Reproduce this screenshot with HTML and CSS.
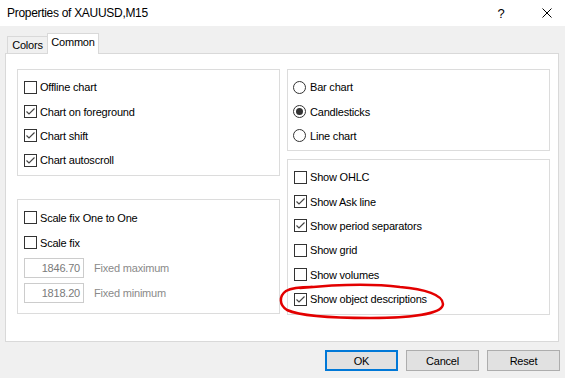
FILE: index.html
```html
<!DOCTYPE html>
<html lang="en">
<head>
  <meta charset="UTF-8">
  <meta name="viewport" content="width=device-width, initial-scale=1.0">
  <title>Properties of XAUUSD,M15</title>
  <link rel="stylesheet" href="styles.css">
</head>
<body>
  <div class="window">
    <!-- Barra del titolo -->
    <div class="titlebar">
      <span class="title">Properties of XAUUSD,M15</span>
      <span class="help">?</span>
      <span class="close">
        <svg width="10" height="10" viewBox="0 0 10 10"><path d="M0.5 0.5 L9.5 9.5 M9.5 0.5 L0.5 9.5" stroke="#000" stroke-width="1" fill="none"/></svg>
      </span>
    </div>

    <!-- Schede -->
    <div class="tabs">
      <div class="tab">Colors</div>
      <div class="tab active">Common</div>
    </div>

    <div class="page">
      <div class="col col-left">
        <div class="group group-chart">
          <div class="row"><span class="box"></span>Offline chart</div>
          <div class="row"><span class="box checked"><svg viewBox="0 0 11 11"><polyline points="1.5,5.5 4,8 9.5,2.5"/></svg></span>Chart on foreground</div>
          <div class="row"><span class="box checked"><svg viewBox="0 0 11 11"><polyline points="1.5,5.5 4,8 9.5,2.5"/></svg></span>Chart shift</div>
          <div class="row"><span class="box checked"><svg viewBox="0 0 11 11"><polyline points="1.5,5.5 4,8 9.5,2.5"/></svg></span>Chart autoscroll</div>
        </div>
        <div class="group group-scale">
          <div class="row"><span class="box"></span>Scale fix One to One</div>
          <div class="row"><span class="box"></span>Scale fix</div>
          <div class="row"><span class="field">1846.70</span><span class="muted">Fixed maximum</span></div>
          <div class="row"><span class="field">1818.20</span><span class="muted">Fixed minimum</span></div>
        </div>
      </div>

      <div class="col col-right">
        <div class="group group-type">
          <div class="row"><span class="radio"></span>Bar chart</div>
          <div class="row"><span class="radio selected"></span>Candlesticks</div>
          <div class="row"><span class="radio"></span>Line chart</div>
        </div>
        <div class="group group-show">
          <div class="row"><span class="box"></span>Show OHLC</div>
          <div class="row"><span class="box checked"><svg viewBox="0 0 11 11"><polyline points="1.5,5.5 4,8 9.5,2.5"/></svg></span>Show Ask line</div>
          <div class="row"><span class="box checked"><svg viewBox="0 0 11 11"><polyline points="1.5,5.5 4,8 9.5,2.5"/></svg></span>Show period separators</div>
          <div class="row"><span class="box"></span>Show grid</div>
          <div class="row"><span class="box"></span>Show volumes</div>
          <div class="row"><span class="box checked"><svg viewBox="0 0 11 11"><polyline points="1.5,5.5 4,8 9.5,2.5"/></svg></span>Show object descriptions</div>
        </div>
      </div>
    </div>

    <div class="buttons">
      <div class="btn default">OK</div>
      <div class="btn">Cancel</div>
      <div class="btn">Reset</div>
    </div>

    <!-- Cerchio rosso disegnato a mano -->
    <svg class="annotation" width="565" height="378" viewBox="0 0 565 378">
      <path d="M300 288 C330 285 370 283 400 287 C425 289 443 295 443 304 C443 314 410 318 370 318 C335 318 300 316 287 310 C279 305 279 296 286 291 C291 288 300 287 312 287" fill="none" stroke="#e30000" stroke-width="2.5" stroke-linecap="round"/>
    </svg>
  </div>
</body>
</html>
```

FILE: styles.css
```css
/* Generale */
body {
  margin: 0;
  padding: 0;
  background: #f0f0f0;
  font-family: "Liberation Sans", Arial, sans-serif;
  font-size: 11px;
  letter-spacing: -0.2px;
  color: #000;
}

.window {
  width: 565px;
  height: 378px;
  position: relative;
  overflow: hidden;
}

/* Barra del titolo */
.titlebar {
  height: 26px;
  background: #fff;
  display: flex;
  align-items: center;
}

.title {
  flex: 1;
  padding-left: 7px;
  font-size: 12px;
  letter-spacing: -0.3px;
}

.help {
  width: 24px;
  margin-right: 16px;
  text-align: center;
  font-size: 13px;
}

.close {
  width: 36px;
  display: flex;
  justify-content: center;
}

.close svg {
  display: block;
}

/* Schede */
.tabs {
  display: flex;
  align-items: flex-end;
  height: 21px;
  margin-top: 7px;
  padding-left: 7px;
}

.tab {
  box-sizing: border-box;
  width: 41px;
  height: 18px;
  border: 1px solid #d9d9d9;
  border-bottom: none;
  text-align: center;
  line-height: 16px;
}

.tab.active {
  position: relative;
  width: 52px;
  height: 21px;
  margin-left: -1px;
  background: #fff;
  line-height: 16px;
}

.page {
  box-sizing: border-box;
  width: 554px;
  height: 289px;
  margin: -1px 0 0 5px;
  padding: 15px 8px 0 11px;
  border: 1px solid #d9d9d9;
  background: #fff;
  display: flex;
  gap: 7px;
}

.col {
  width: 263px;
  display: flex;
  flex-direction: column;
}

.col-left {
  gap: 23px;
}

.col-right {
  gap: 8px;
}

/* Gruppi */
.group {
  box-sizing: border-box;
  border: 1px solid #dcdcdc;
  padding: 5px 0 0 6px;
}

.group-chart { height: 107px; }
.group-scale { height: 115px; }
.group-type { height: 82px; padding-left: 5px; }
.group-show { height: 156px; }

.row {
  height: 24.4px;
  display: flex;
  align-items: center;
  white-space: nowrap;
}

.group-scale .row {
  height: 25px;
}

.box {
  box-sizing: border-box;
  width: 13px;
  height: 13px;
  border: 1px solid #333;
  background: #fff;
  margin-right: 3px;
  flex-shrink: 0;
}

.box svg {
  display: block;
  width: 11px;
  height: 11px;
}

.box polyline {
  fill: none;
  stroke: #444;
  stroke-width: 1.2;
}

.radio {
  box-sizing: border-box;
  width: 13px;
  height: 13px;
  border: 1px solid #333;
  border-radius: 50%;
  margin-right: 4px;
  display: flex;
  align-items: center;
  justify-content: center;
  flex-shrink: 0;
}

.radio.selected::after {
  content: "";
  width: 7px;
  height: 7px;
  border-radius: 50%;
  background: #333;
}

.field {
  box-sizing: border-box;
  width: 60px;
  height: 20px;
  border: 1px solid #cccccc;
  padding-right: 3px;
  margin-right: 10px;
  text-align: right;
  line-height: 18px;
  color: #7a7a7a;
}

.muted {
  color: #8a8a8a;
}

/* Pulsanti */
.buttons {
  display: flex;
  justify-content: flex-end;
  gap: 8px;
  margin-top: 8px;
  padding-right: 5px;
}

.btn {
  box-sizing: border-box;
  width: 73px;
  height: 21px;
  border: 1px solid #adadad;
  background: #e1e1e1;
  display: flex;
  align-items: center;
  justify-content: center;
}

.btn.default {
  border: 2px solid #0078d7;
}

/* Annotazione sopra la finestra */
.annotation {
  position: absolute;
  top: 0;
  left: 0;
  pointer-events: none;
}
```
